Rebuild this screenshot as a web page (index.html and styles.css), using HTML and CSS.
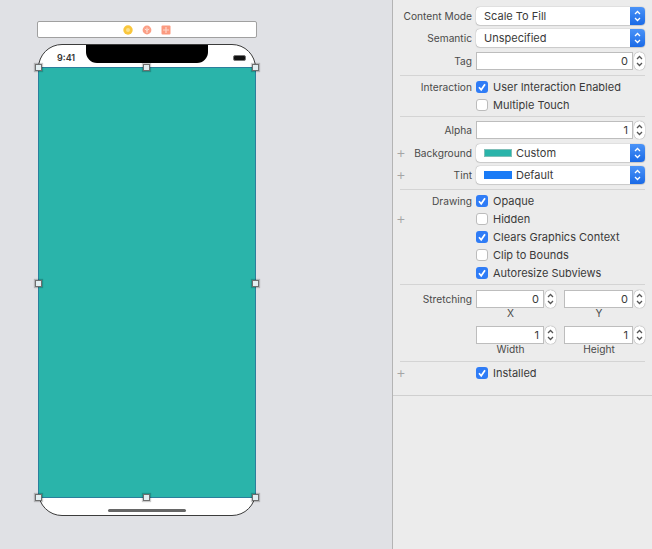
FILE: index.html
```html
<!DOCTYPE html>
<html lang="en">
<head>
    <meta charset="UTF-8">
    <title>View Inspector</title>
    <link rel="stylesheet" href="styles.css">
</head>
<body>
    <svg class="defs" width="0" height="0">
        <symbol id="updown" viewBox="0 0 9 14">
            <path d="M2 5 L4.5 2.5 L7 5 M2 9 L4.5 11.5 L7 9" fill="none" stroke="currentColor" stroke-width="1.3"/>
        </symbol>
        <symbol id="check" viewBox="0 0 12 12">
            <path d="M3 6.3 L5.2 8.8 L9 3.2" fill="none" stroke="#fff" stroke-width="1.7"/>
        </symbol>
    </svg>

    <!-- Storyboard canvas -->
    <div class="canvas">
        <div class="dock">
            <svg width="10" height="10" viewBox="0 0 10 10">
                <circle cx="5" cy="5" r="4.7" fill="#f9c63c"/>
                <circle cx="5" cy="5" r="2" fill="#fbe08c"/>
            </svg>
            <svg width="10" height="10" viewBox="0 0 10 10">
                <circle cx="5" cy="5" r="4.4" fill="#fb9f86"/>
                <path d="M5 2.5 V8 M2.8 4 L5 5.4 L7.2 4" fill="none" stroke="#fde0d6" stroke-width="1"/>
            </svg>
            <svg width="10" height="10" viewBox="0 0 10 10">
                <rect x="0.5" y="0.5" width="9" height="9" rx="1" fill="#fb9a80"/>
                <path d="M5 2 V8 M2 5 H8" stroke="#fdd5c8" stroke-width="1.2"/>
            </svg>
        </div>
        <div class="phone">
            <div class="status">
                <span class="time">9:41</span>
                <span class="battery"></span>
            </div>
            <div class="notch"></div>
            <div class="screen">
                <span class="handle tl"></span>
                <span class="handle tc"></span>
                <span class="handle tr"></span>
                <span class="handle ml"></span>
                <span class="handle mr"></span>
                <span class="handle bl"></span>
                <span class="handle bc"></span>
                <span class="handle br"></span>
            </div>
            <div class="home"><span class="home-bar"></span></div>
        </div>
    </div>

    <!-- Attributes inspector -->
    <div class="inspector">
        <div class="section s-view">
            <div class="row">
                <label>Content Mode</label>
                <div class="select"><span class="select-text">Scale To Fill</span><span class="cap"><svg width="9" height="14"><use href="#updown"/></svg></span></div>
            </div>
            <div class="row">
                <label>Semantic</label>
                <div class="select"><span class="select-text">Unspecified</span><span class="cap"><svg width="9" height="14"><use href="#updown"/></svg></span></div>
            </div>
            <div class="row row-tag">
                <label>Tag</label>
                <div class="number">
                    <div class="field">0</div>
                    <div class="stepper"><svg width="9" height="14"><use href="#updown"/></svg></div>
                </div>
            </div>
        </div>
        <div class="sep"></div>

        <div class="section s-interaction">
            <div class="row row-check">
                <label>Interaction</label>
                <div class="check"><span class="box on"><svg width="12" height="12"><use href="#check"/></svg></span>User Interaction Enabled</div>
            </div>
            <div class="row row-check">
                <div class="check"><span class="box"></span>Multiple Touch</div>
            </div>
        </div>
        <div class="sep"></div>

        <div class="section s-alpha">
            <div class="row">
                <label>Alpha</label>
                <div class="number">
                    <div class="field">1</div>
                    <div class="stepper"><svg width="9" height="14"><use href="#updown"/></svg></div>
                </div>
            </div>
            <div class="row row-bg">
                <span class="plus">+</span>
                <label>Background</label>
                <div class="select"><span class="swatch teal"></span><span class="select-text">Custom</span><span class="cap"><svg width="9" height="14"><use href="#updown"/></svg></span></div>
            </div>
            <div class="row">
                <span class="plus">+</span>
                <label>Tint</label>
                <div class="select"><span class="swatch blue"></span><span class="select-text">Default</span><span class="cap"><svg width="9" height="14"><use href="#updown"/></svg></span></div>
            </div>
        </div>
        <div class="sep"></div>

        <div class="section s-drawing">
            <div class="row row-check">
                <label>Drawing</label>
                <div class="check"><span class="box on"><svg width="12" height="12"><use href="#check"/></svg></span>Opaque</div>
            </div>
            <div class="row row-check">
                <span class="plus">+</span>
                <div class="check"><span class="box"></span>Hidden</div>
            </div>
            <div class="row row-check">
                <div class="check"><span class="box on"><svg width="12" height="12"><use href="#check"/></svg></span>Clears Graphics Context</div>
            </div>
            <div class="row row-check">
                <div class="check"><span class="box"></span>Clip to Bounds</div>
            </div>
            <div class="row row-check">
                <div class="check"><span class="box on"><svg width="12" height="12"><use href="#check"/></svg></span>Autoresize Subviews</div>
            </div>
        </div>
        <div class="sep"></div>

        <div class="section s-stretch">
            <div class="row row-pair">
                <label>Stretching</label>
                <div class="pair">
                    <div class="number"><div class="field">0</div><div class="stepper"><svg width="9" height="14"><use href="#updown"/></svg></div></div>
                    <div class="number"><div class="field">0</div><div class="stepper"><svg width="9" height="14"><use href="#updown"/></svg></div></div>
                    <span class="caption">X</span>
                    <span class="caption">Y</span>
                </div>
            </div>
            <div class="row row-pair row-pair2">
                <div class="pair">
                    <div class="number"><div class="field">1</div><div class="stepper"><svg width="9" height="14"><use href="#updown"/></svg></div></div>
                    <div class="number"><div class="field">1</div><div class="stepper"><svg width="9" height="14"><use href="#updown"/></svg></div></div>
                    <span class="caption">Width</span>
                    <span class="caption">Height</span>
                </div>
            </div>
        </div>
        <div class="sep"></div>

        <div class="section s-installed">
            <div class="row row-check">
                <span class="plus">+</span>
                <div class="check"><span class="box on"><svg width="12" height="12"><use href="#check"/></svg></span>Installed</div>
            </div>
        </div>
        <div class="sep sep-full"></div>
    </div>
</body>
</html>
```

FILE: styles.css
```css
* {
    box-sizing: border-box;
}

html, body {
    height: 100%;
}

body {
    margin: 0;
    display: flex;
    overflow: hidden;
    font-family: Inter, "Liberation Sans", sans-serif;
    font-size: 11px;
    color: #3a3a3a;
    background-color: #ececec;
}

.defs {
    position: absolute;
}

/* Canvas */
.canvas {
    width: 392px;
    flex-shrink: 0;
    padding: 21px 0 0 37px;
    background-color: #e0e1e5;
}

.dock {
    width: 220px;
    height: 17px;
    display: flex;
    justify-content: center;
    align-items: center;
    gap: 9px;
    background: white;
    border: 1px solid #a0a0a0;
    border-radius: 2px;
}

.phone {
    position: relative;
    width: 218px;
    height: 472px;
    margin: 6px 0 0 1px;
    background: white;
    border: 1px solid #3c3c3c;
    border-radius: 24px;
    display: flex;
    flex-direction: column;
}

.status {
    height: 22px;
    display: flex;
    justify-content: space-between;
    align-items: center;
    padding: 3px 9px 0 18px;
    font-size: 9px;
    font-weight: 600;
    color: #333;
}

.battery {
    width: 13px;
    height: 6px;
    background: #111;
    border: 1px solid #777;
    border-radius: 2px;
}

.notch {
    position: absolute;
    top: 0;
    left: 47px;
    width: 122px;
    height: 18px;
    background: black;
    border-radius: 0 0 11px 11px;
}

.screen {
    position: relative;
    height: 431px;
    background: #2ab4aa;
    border: 1px solid #2b7f9c;
    margin: 0 -1px;
}

.handle {
    position: absolute;
    width: 7px;
    height: 7px;
    background: #e3eff2;
    border: 1px solid #6f6f6f;
    box-shadow: 0 0 1px 1px rgba(0, 0, 0, 0.2);
}

.tl, .tc, .tr { top: -4px; }
.ml, .mr { top: 212px; }
.bl, .bc, .br { bottom: -4px; }
.tl, .ml, .bl { left: -4px; }
.tc, .bc { left: 104px; }
.tr, .mr, .br { right: -4px; }

.home {
    flex: 1;
    display: flex;
    justify-content: center;
    padding-top: 11px;
}

.home-bar {
    width: 78px;
    height: 3px;
    background: #666;
    border-radius: 2px;
}

/* Inspector */
.inspector {
    flex: 1;
    border-left: 1px solid #b4b4b4;
}

.sep {
    height: 1px;
    margin: 0 7px 0 7px;
    background: #d4d4d4;
}

.sep-full {
    margin: 0;
    background: #cfcfcf;
}

.s-view { padding: 5px 7px 3px 0; }
.s-interaction { padding: 2px 7px 2px 0; }
.s-alpha { padding: 2px 7px 3px 0; }
.s-drawing { padding: 2px 7px 2px 0; }
.s-stretch { padding: 5px 7px 6px 0; }
.s-installed { padding: 2px 7px 13px 0; }

.row {
    height: 22px;
    display: grid;
    grid-template-columns: 79px 1fr;
    column-gap: 4px;
    align-items: center;
}

.row-tag, .row-bg {
    margin-top: 1px;
}

.row-check {
    height: 18px;
}

.row label {
    grid-column: 1;
    grid-row: 1;
    font-size: 10.2px;
    text-align: right;
    color: #4a4a4a;
    white-space: nowrap;
}

.plus {
    grid-column: 1;
    grid-row: 1;
    margin-left: 3px;
    font-size: 15px;
    line-height: 14px;
    font-weight: 300;
    color: #a5a5a5;
}

.row > .select,
.row > .number,
.row > .check,
.row > .pair {
    grid-column: 2;
    grid-row: 1;
}

.select {
    height: 18px;
    display: flex;
    align-items: center;
    padding-left: 8px;
    background: white;
    border-radius: 4px;
    box-shadow: 0 0 1px rgba(0, 0, 0, 0.5), 0 1px 1px rgba(0, 0, 0, 0.1);
    overflow: hidden;
}

.select-text {
    flex: 1;
}

.cap {
    width: 15px;
    height: 18px;
    display: flex;
    align-items: center;
    justify-content: center;
    color: white;
    background: linear-gradient(#4a93f8, #1a6ae6);
}

.swatch {
    width: 28px;
    height: 8px;
    margin-right: 4px;
}

.swatch.teal {
    background: #2ab4aa;
    border: 1px solid #7fbfb8;
}

.swatch.blue {
    background: #1a7bf6;
}

.number {
    display: flex;
    gap: 1px;
    height: 18px;
}

.field {
    flex: 1;
    padding: 0 4px;
    line-height: 16px;
    text-align: right;
    background: white;
    border: 1px solid #bdbdbd;
}

.stepper {
    width: 11px;
    display: flex;
    align-items: center;
    justify-content: center;
    color: #555;
    background: white;
    border-radius: 6px;
    box-shadow: 0 0 1px rgba(0, 0, 0, 0.6);
}

.check {
    display: flex;
    align-items: center;
    gap: 5px;
    color: #3a3a3a;
}

.box {
    width: 12px;
    height: 12px;
    background: white;
    border: 1px solid #bcbcbc;
    border-radius: 3px;
}

.box svg {
    display: block;
}

.box.on {
    background: #2f7cf6;
    border: 0;
}

.row-pair {
    height: 29px;
    align-items: start;
}

.row-pair2 {
    margin-top: 7px;
}

.row-pair label {
    line-height: 18px;
}

.pair {
    display: grid;
    grid-template-columns: 80px 81px;
    column-gap: 8px;
}

.caption {
    font-size: 10.2px;
    line-height: 11px;
    text-align: center;
    padding-right: 11px;
    color: #4a4a4a;
}
```
